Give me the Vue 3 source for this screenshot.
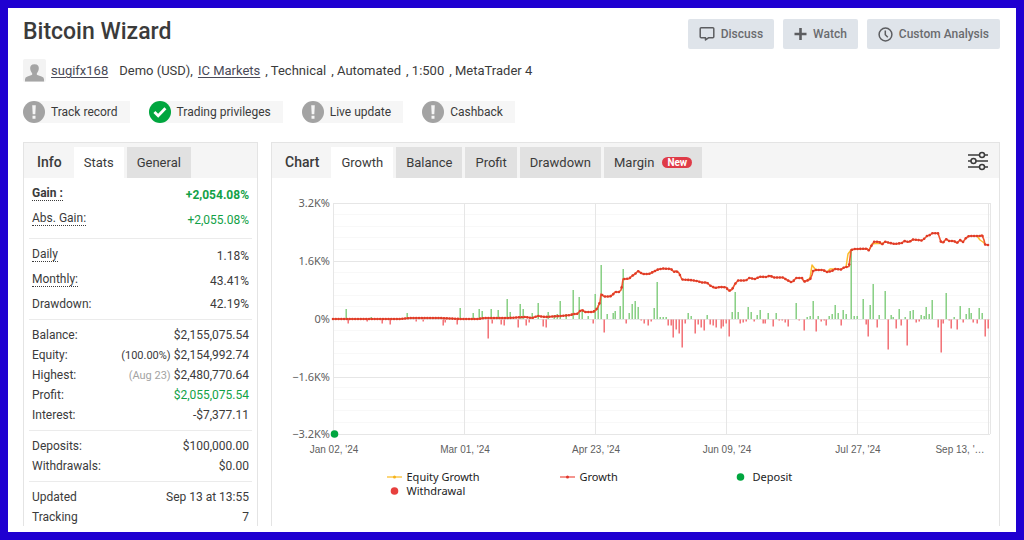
<script setup>
const details = [', Technical', ', Automated', ', 1:500', ', MetaTrader 4']

const badges = [
  { label: 'Track record', ok: false },
  { label: 'Trading privileges', ok: true },
  { label: 'Live update', ok: false },
  { label: 'Cashback', ok: false },
]

const sections = [
  {
    kind: 'roomy',
    rows: [
      { label: 'Gain :', value: '+2,054.08%', hint: true, bold: true, green: true },
      { label: 'Abs. Gain:', value: '+2,055.08%', hint: true, green: true },
    ],
  },
  {
    kind: 'roomy',
    rows: [
      { label: 'Daily', value: '1.18%', hint: true },
      { label: 'Monthly:', value: '43.41%', hint: true },
      { label: 'Drawdown:', value: '42.19%' },
    ],
  },
  {
    kind: 'tight',
    rows: [
      { label: 'Balance:', value: '$2,155,075.54' },
      { label: 'Equity:', value: '$2,154,992.74', note: '(100.00%)' },
      { label: 'Highest:', value: '$2,480,770.64', note: '(Aug 23)', faint: true },
      { label: 'Profit:', value: '$2,055,075.54', green: true },
      { label: 'Interest:', value: '-$7,377.11' },
    ],
  },
  {
    kind: 'tight',
    rows: [
      { label: 'Deposits:', value: '$100,000.00' },
      { label: 'Withdrawals:', value: '$0.00' },
    ],
  },
  {
    kind: 'tight',
    rows: [
      { label: 'Updated', value: 'Sep 13 at 13:55' },
      { label: 'Tracking', value: '7' },
    ],
  },
]

const chartTabs = ['Growth', 'Balance', 'Profit', 'Drawdown', 'Margin']

// Plot area: x 61..716, y 25..256, zero line at 141.
const left = 61
const right = 716
const step = (right - left) / 236
const yTicks = [
  { y: 25, text: '3.2K%' },
  { y: 83, text: '1.6K%' },
  { y: 141, text: '0%' },
  { y: 199, text: '−1.6K%' },
  { y: 256, text: '−3.2K%' },
]
const minor = []
for (let i = 1; i < 20; i++) if (i % 5) minor.push(25 + i * 11.55)
const xTicks = [
  { x: 62, text: "Jan 02, '24" },
  { x: 193, text: "Mar 01, '24" },
  { x: 324, text: "Apr 23, '24" },
  { x: 455, text: "Jun 09, '24" },
  { x: 586, text: "Jul 27, '24" },
  { x: 688, text: "Sep 13, '…" },
]

// [x, height]; positive is a gain, negative a loss.
const bars = [
  [74, 10], [76, -4], [95, -2], [99, 2], [110, -4], [118, -5], [135, 6], [144, -2], [151, -2], [171, -6], [173, -3], [185, -5], [188, 11],
  [201, 6], [207, 10], [210, 8], [216, -19], [219, 10], [220, -4], [226, 9], [229, -5], [232, -6], [235, 20], [238, 7], [246, -8],
  [248, 15], [251, 10], [254, -6], [257, -3], [260, 6], [266, 16], [271, -7], [274, -8], [276, 7], [282, 4], [285, 5], [288, 18], [294, 5],
  [301, 29], [307, 22], [310, 9], [316, 3], [321, -4], [323, 25], [326, 14], [329, 54], [332, -13], [335, 5], [341, 6], [343, 8],
  [348, 13], [351, 50], [354, -4], [357, 6], [360, 15], [363, 18], [366, 12], [369, -1], [372, -4], [376, -6], [379, -2], [382, 11],
  [385, 37], [388, 2], [391, 2], [394, 2], [396, -6], [399, -6], [401, -18], [404, -10], [407, -14], [410, -28], [413, -4], [416, 6],
  [419, 3], [423, -14], [426, -5], [429, -8], [432, -11], [435, 4], [438, -5], [441, -6], [444, -8], [449, -9], [451, -7], [454, -4],
  [457, -17], [460, 7], [463, 27], [466, 7], [468, -4], [471, -3], [474, -2], [476, 12], [479, 7], [482, -2], [485, 4], [488, 9],
  [491, -4], [493, -4], [496, 6], [501, -7], [504, 6], [507, -1], [510, -1], [513, -3], [516, -7], [524, 16], [527, -1], [532, -11],
  [535, 2], [538, 3], [541, 18], [544, -12], [546, 3], [549, -2], [552, -1], [554, -6], [557, 3], [560, 5], [563, 14], [566, 6],
  [569, -6], [571, 9], [574, 5], [579, 70], [582, 3], [585, 3], [591, 20], [594, -5], [596, -17], [598, 14], [601, 35], [605, -8],
  [607, 4], [613, 28], [616, -30], [619, 4], [621, 2], [624, -9], [627, 10], [629, -6], [633, 2], [635, -26], [638, 8], [641, 9],
  [644, -3], [647, -2], [649, 4], [652, 3], [654, 12], [657, 5], [660, 19], [666, -8], [669, -33], [671, -4], [674, 26], [677, -1],
  [679, -9], [682, 2], [685, -10], [688, 13], [691, -3], [694, 5], [697, 11], [699, 6], [701, -3], [705, -4], [707, 11], [710, 6],
  [713, -17], [716, -9],
]

const growth = [
  [61, 141], [128, 141], [138, 140], [168, 140], [188, 141], [206, 141], [212, 140], [236, 140], [253, 139], [260, 140],
  [266, 138], [273, 139], [288, 138], [299, 137], [301, 136], [305, 136], [308, 133], [310, 132], [313, 134], [321, 134],
  [324, 132], [326, 129], [328, 124], [329, 116], [332, 118.5], [338, 118.5], [341, 116.5], [343, 114], [347, 114], [349, 112],
  [350, 108], [351, 101], [357, 100.7], [360, 98], [363, 96], [366, 93], [369, 95], [371, 96], [377, 96], [380, 94.5],
  [383, 93], [386, 91.5], [391, 90.5], [399, 91], [402, 94], [404, 93], [407, 95], [410, 101.5], [418, 102], [425, 103],
  [430, 104.5], [435, 104.5], [438, 107.5], [443, 110], [448, 109], [454, 109.3], [457, 113], [460, 111.5], [463, 106],
  [466, 102.5], [474, 102.5], [477, 100], [483, 101], [488, 98.7], [494, 99], [498, 97.7], [502, 99.5], [511, 99.5],
  [515, 102], [519, 104], [521, 103.5], [524, 100], [530, 100], [532, 103.7], [538, 101.5], [540, 97], [541, 93], [544, 92],
  [551, 92], [555, 94], [560, 93], [563, 91], [569, 91.5], [572, 89.5], [577, 88.5], [579, 72], [583, 71], [595, 70.7],
  [597, 72.5], [599, 68.5], [602, 63.7], [607, 63.7], [610, 66.5], [613, 63.7], [618, 65], [623, 66], [630, 65], [632, 63],
  [637, 64], [641, 61.5], [650, 62.5], [653, 60], [655, 58], [658, 57], [660, 55.3], [666, 55.3], [669, 64], [671, 64.7],
  [674, 61], [677, 63], [682, 63], [685, 65], [688, 62], [691, 64], [694, 60], [697, 58], [708, 58], [710, 57], [712, 62],
  [713, 66.5], [716, 67],
]

function valueAt(x) {
  const i = growth.findIndex((p) => p[0] >= x)
  if (i <= 0) return growth[0][1]
  const [x0, y0] = growth[i - 1]
  const [x1, y1] = growth[i]
  return y0 + ((y1 - y0) * (x - x0)) / (x1 - x0)
}

const dots = []
for (let i = 0; i <= 236; i++) {
  const x = Math.min(left + i * step, right)
  dots.push([x, valueAt(x)])
}
const toPoints = (list) => list.map((p) => p.join(',')).join(' ')
const growthPoints = toPoints(growth)
const equitySegments = [
  [[535, 102], [538, 100], [540, 87], [543, 91], [546, 92]],
  [[574, 89], [576, 76], [579, 72]],
  [[555, 94], [558, 91], [563, 91]],
  [[597, 72], [600, 66], [603, 65.5], [609, 65.5], [612, 65]],
  [[705, 58], [708, 62], [711, 64], [713, 66]],
].map(toPoints)
</script>

<template>
  <div class="page">
    <header class="top">
      <h1>Bitcoin Wizard</h1>
      <div class="actions">
        <button type="button">
          <svg width="16" height="16" viewBox="0 0 16 16" fill="none" stroke="currentColor" stroke-width="1.5" stroke-linejoin="round"><path d="M2.2 1.8h11.6q1 0 1 1v8q0 1-1 1H9.4L6.5 14v-2.2H2.2q-1 0-1-1v-8q0-1 1-1z" /></svg>
          Discuss
        </button>
        <button type="button">
          <svg width="13" height="14" viewBox="0 0 13 14" stroke="currentColor" stroke-width="2.6"><path d="M6.5 1v12M.5 7h12" /></svg>
          Watch
        </button>
        <button type="button">
          <svg width="15" height="15" viewBox="0 0 15 15" fill="none" stroke="currentColor" stroke-width="1.5"><circle cx="7.5" cy="7.5" r="6.4" /><path d="M7.3 3.6v4.2l2.5 2.4" /></svg>
          Custom Analysis
        </button>
      </div>
    </header>

    <div class="meta">
      <svg width="23" height="23" viewBox="0 0 23 23"><rect width="23" height="23" rx="2" fill="#f3f3f3" /><path d="M2 22.5v-2.3q0-2 2.5-2.7l4.2-1.600q.8-.4.5-1.500Q7.600 12.800 7.200 10 6.700 5.200 11.500 5.200T15.800 10q-.4 2.800-2 4.400-.3 1.100.5 1.500l4.200 1.600q2.500.7 2.500 2.700v2.300z" fill="#a5a5a5" /></svg>
      <a href="#" class="owner">sugifx168</a>
      <span>Demo (USD),</span>
      <a href="#">IC Markets</a>
      <span v-for="d in details" :key="d">{{ d }}</span>
    </div>

    <ul class="badges">
      <li v-for="b in badges" :key="b.label">
        <svg v-if="b.ok" width="22" height="22" viewBox="0 0 22 22"><circle cx="11" cy="11" r="11" fill="#00a63f" /><path d="M5.4 11l3.800 3.700 7.200-7.400" fill="none" stroke="#fff" stroke-width="2.8" /></svg>
        <svg v-else width="22" height="22" viewBox="0 0 22 22"><circle cx="11" cy="11" r="11" fill="#a3a3a3" /><path d="M9.200 4.200h3.600l-.5 9H9.700zM9.500 14.700h3v3h-3z" fill="#f5f5f5" /></svg>
        <span>{{ b.label }}</span>
      </li>
    </ul>

    <main class="panels">
      <section class="panel">
        <div class="tabs">
          <h2>Info</h2>
          <button type="button" class="active">Stats</button>
          <button type="button">General</button>
        </div>
        <div class="stats">
          <dl v-for="(s, i) in sections" :key="i" :class="s.kind">
            <div v-for="r in s.rows" :key="r.label" :class="{ bold: r.bold, hinted: r.hint }">
              <dt><span>{{ r.label }}</span></dt>
              <dd :class="{ green: r.green }"><small v-if="r.note" :class="{ faint: r.faint }">{{ r.note }}</small> {{ r.value }}</dd>
            </div>
          </dl>
        </div>
      </section>

      <section class="panel">
        <div class="tabs">
          <h2>Chart</h2>
          <button v-for="(t, i) in chartTabs" :key="t" type="button" :class="{ active: i === 0 }">
            {{ t }}<span v-if="t === 'Margin'" class="new">New</span>
          </button>
          <button type="button" class="filter" aria-label="Chart settings">
            <svg width="20" height="20" viewBox="0 0 20 20" fill="none" stroke="#3b3b3b" stroke-width="1.5"><path d="M0 4h11.5M16.5 4H20M0 10h3M8 10h12M0 16h11.5M16.5 16H20" /><circle cx="14" cy="4" r="2.5" /><circle cx="5.5" cy="10" r="2.5" /><circle cx="14" cy="16" r="2.5" /></svg>
          </button>
        </div>
        <svg class="plot" viewBox="0 0 727 286" role="img" aria-label="Growth chart">
          <g fill="none" shape-rendering="crispEdges">
            <path v-for="y in minor" :key="y" :d="`M62 ${y}H718`" stroke="#f8f8f8" />
            <path v-for="t in yTicks" :key="t.y" :d="`M61 ${t.y + 0.5}H718`" stroke="#e6e6e6" />
            <path v-for="t in xTicks.slice(0, 5)" :key="t.x" :d="`M${t.x - 0.5} 25V256`" stroke="#e6e6e6" />
            <path d="M716.5 25V256M718.5 25V256" stroke="#e6e6e6" />
          </g>
          <g>
            <rect v-for="(b, i) in bars" :key="i" :x="b[0] - 0.5" :y="b[1] > 0 ? 141 - b[1] : 141.5" width="1.4" :height="Math.abs(b[1])" :fill="b[1] > 0 ? '#7fcb7b' : '#f2656b'" />
          </g>
          <g fill="none" stroke-linejoin="round">
            <polyline v-for="(s, i) in equitySegments" :key="i" :points="s" stroke="#fbbd2c" stroke-width="1.5" />
            <polyline :points="growthPoints" stroke="#f0562f" stroke-width="1.6" />
          </g>
          <circle v-for="(d, i) in dots" :key="i" :cx="d[0]" :cy="d[1]" r="1.3" fill="#df3b28" />
          <circle cx="62.5" cy="256" r="3.8" fill="#00a63f" />
          <g class="y-labels">
            <text v-for="t in yTicks" :key="t.y" x="58" :y="t.y + 4">{{ t.text }}</text>
          </g>
          <g class="x-labels">
            <text v-for="t in xTicks" :key="t.x" :x="t.x" y="275">{{ t.text }}</text>
          </g>
        </svg>
        <ul class="legend">
          <li><svg width="15" height="8" viewBox="0 0 15 8"><path d="M0 4h15" stroke="#fbc94e" stroke-width="1.5" /><circle cx="7.5" cy="4" r="1.5" fill="#f5b21a" /></svg>Equity Growth</li>
          <li><svg width="15" height="8" viewBox="0 0 15 8"><path d="M0 4h15" stroke="#f07269" stroke-width="1.5" /><circle cx="7.5" cy="4" r="1.5" fill="#e0352b" /></svg>Growth</li>
          <li><svg width="15" height="8" viewBox="0 0 15 8"><circle cx="7.5" cy="4" r="3.8" fill="#00a63f" /></svg>Deposit</li>
          <li><svg width="15" height="8" viewBox="0 0 15 8"><circle cx="7.5" cy="4" r="3.8" fill="#e7403e" /></svg>Withdrawal</li>
        </ul>
      </section>
    </main>
  </div>
</template>

<style>
body { background: #fff; }
</style>

<style scoped>
.page {
  box-sizing: border-box;
  min-height: 100vh;
  border: 8px solid #1f00d1;
  padding: 11px 16px 6px 15px;
  display: flex;
  flex-direction: column;
  font-family: Roboto, "Liberation Sans", sans-serif;
  font-size: 13px;
  color: #3b3b3b;
}
.page * { box-sizing: border-box; }
h1, h2, p, ul, dl, dd { margin: 0; padding: 0; }
ul { list-style: none; }
svg { display: block; flex: none; }
button { font: inherit; color: inherit; border: 0; margin: 0; }
a { color: #4a4a57; text-underline-offset: 2px; }
.top { display: flex; justify-content: space-between; height: 30px; }
h1 { font-size: 23px; line-height: 26px; font-weight: 500; }
.actions { display: flex; gap: 9px; }
.actions button {
  display: flex;
  align-items: center;
  gap: 6px;
  padding: 0 11px;
  background: #dfe4ea;
  border-radius: 2px;
  color: #6a6b6e;
  font-size: 12px;
  font-weight: 500;
}
.actions svg { color: #5c5d60; }
.meta { display: flex; align-items: center; gap: 5px; margin-top: 10px; height: 23px; }
.meta .owner { margin-right: 6px; }
.badges { display: flex; gap: 19px; margin-top: 19px; }
.badges li { display: flex; align-items: center; background: linear-gradient(to right, transparent 11px, #f6f6f6 11px); font-size: 12px; line-height: 22px; }
.badges span { padding: 0 12px 0 6px; }
.panels { flex: 1; display: grid; grid-template-columns: 235px minmax(0, 1fr); gap: 13px; margin-top: 19px; }
.panel { border: 1px solid #e4e4e4; border-bottom: 0; min-width: 0; }
.tabs { display: flex; align-items: flex-end; gap: 3px; height: 35px; background: #f5f5f5; line-height: 31px; }
h2 { font-size: 14px; font-weight: 500; padding: 0 9px 0 13px; }
.tabs button { display: flex; align-items: center; padding: 0 10px; background: #e1e1e1; height: 31px; }
.tabs .active { background: #fff; }
.tabs .filter { margin-left: auto; padding: 0 11px; background: none; height: 35px; }
.new { margin-left: 8px; padding: 0 5px; border-radius: 6px; background: #df3b48; color: #fff; font-size: 10px; line-height: 11px; font-weight: 700; }
.stats { padding: 0 5px; font-size: 12px; }
dl { padding: 5px 3px; line-height: 16px; }
dl + dl { border-top: 1px solid #ebebeb; }
dl > div { display: flex; justify-content: space-between; padding: 2px 0; }
.roomy > div { padding: 4px 0 5px; }
.roomy > div:last-child:not(.hinted) { padding: 2px 0; }
.hinted dt { line-height: 13px; }
.hinted dt span { display: block; border-bottom: 1px dotted #3b3b3b; }
dl:last-child { padding-bottom: 0; }
dl:last-child > div:last-child { padding-bottom: 0; }
.bold { font-weight: 700; }
.green { color: #12a147; }
small { font-size: 11px; line-height: 12px; }
.faint { color: #a3a3a3; }
.plot { width: 100%; height: auto; }
.y-labels { font-family: "Noto Sans", sans-serif; font-size: 11px; fill: #606060; text-anchor: end; }
.x-labels { font-family: "Liberation Sans", sans-serif; font-size: 10px; fill: #606060; text-anchor: middle; }
.legend {
  display: grid;
  grid-template-columns: repeat(3, 173px);
  justify-content: center;
  margin: 6px 0 0 21px;
  font-family: "Noto Sans", sans-serif;
  font-size: 11px;
  line-height: 14px;
  color: #222;
}
.legend li { display: flex; align-items: center; gap: 5px; }
</style>
